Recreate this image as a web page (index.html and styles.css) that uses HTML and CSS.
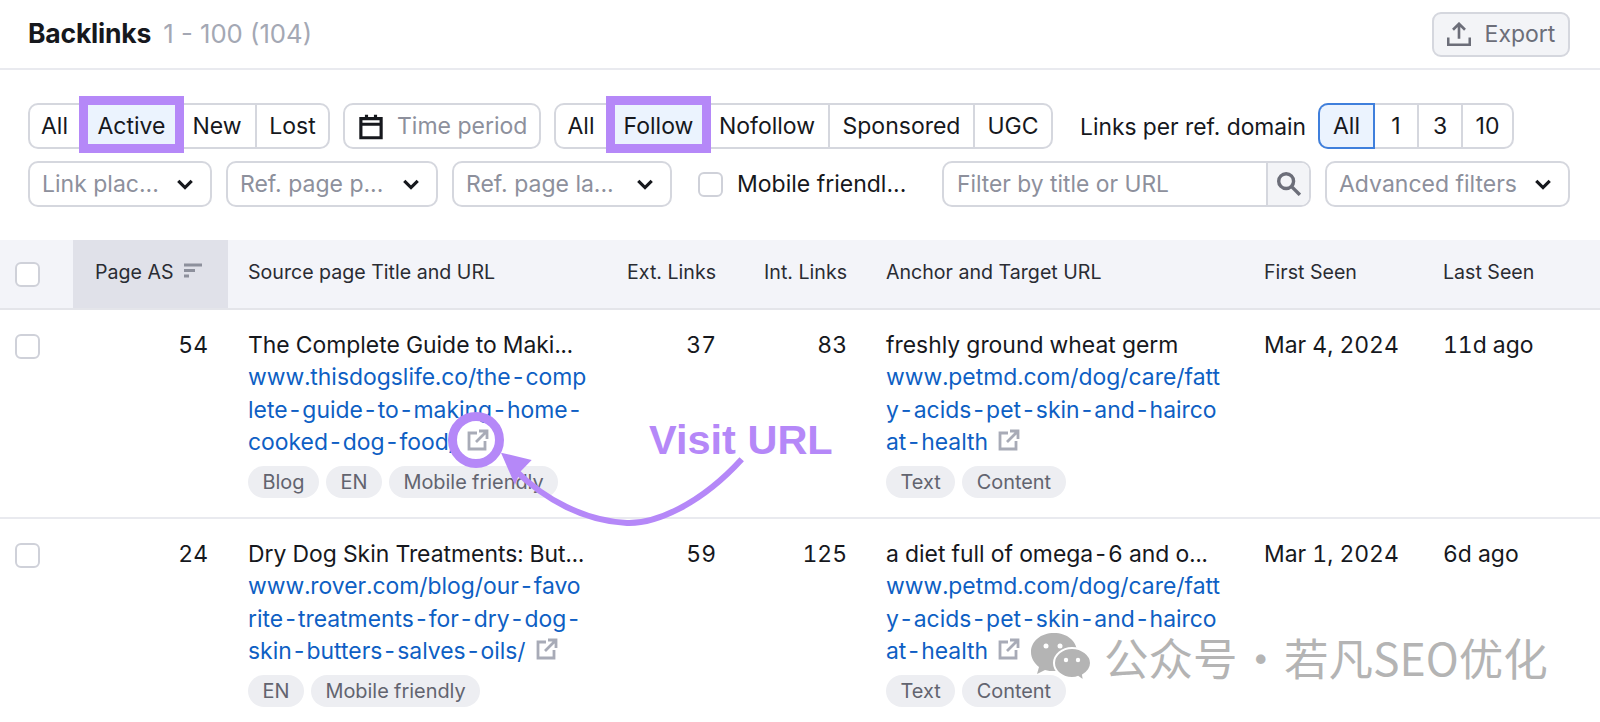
FILE: index.html
```html
<!DOCTYPE html>
<html lang="en">
<head>
<meta charset="utf-8">
<title>Backlinks</title>
<link rel="stylesheet" href="styles.css">
</head>
<body>
<main class="page">
  <header class="topbar">
    <h1 class="title">Backlinks <span class="count">1 - 100 (104)</span></h1>
    <button class="export"><svg class="export-icon" viewBox="2 2 20 20"><path d="M12 16V4M7 8.500 12 3.500l5 5M3 15v6h18v-6"/></svg>Export</button>
  </header>

  <section class="filters">
    <div class="row">
      <div class="seg seg-status">
        <span class="seg-item s-all">All</span><span class="seg-item s-active on marked">Active</span><span class="seg-item s-new">New</span><span class="seg-item s-lost">Lost</span>
      </div>
      <button class="time"><svg class="cal" viewBox="1.500 0 21 24"><path d="M3 5h18v17H3zM3 10h18M8 1.500V6M16 1.500V6"/></svg>Time period</button>
      <div class="seg seg-type">
        <span class="seg-item t-all">All</span><span class="seg-item t-follow on marked">Follow</span><span class="seg-item t-no">Nofollow</span><span class="seg-item t-sp">Sponsored</span><span class="seg-item t-ugc">UGC</span>
      </div>
      <span class="links-label">Links per ref. domain</span>
      <div class="seg seg-links">
        <span class="seg-item l-all selected">All</span><span class="seg-item l-1">1</span><span class="seg-item l-3">3</span><span class="seg-item l-10">10</span>
      </div>
    </div>
    <div class="row">
      <button class="select w-place"><span>Link plac...</span><svg class="chev" viewBox="0 0 14 9"><path d="M1.500 1.500 7 7l5.500-5.500"/></svg></button>
      <button class="select w-power"><span>Ref. page p...</span><svg class="chev" viewBox="0 0 14 9"><path d="M1.500 1.500 7 7l5.500-5.500"/></svg></button>
      <button class="select w-lang"><span>Ref. page la...</span><svg class="chev" viewBox="0 0 14 9"><path d="M1.500 1.500 7 7l5.500-5.500"/></svg></button>
      <label class="mobile"><span class="check"></span>Mobile friendl...</label>
      <div class="search">
        <span class="search-text">Filter by title or URL</span>
        <span class="search-btn"><svg class="mag" viewBox="2 2 21 21"><circle cx="10" cy="10" r="6.500"/><path d="m15 15 7 7"/></svg></span>
      </div>
      <button class="select w-adv"><span>Advanced filters</span><svg class="chev" viewBox="0 0 14 9"><path d="M1.500 1.500 7 7l5.500-5.500"/></svg></button>
    </div>
  </section>

  <section class="table">
    <div class="tr thead">
      <div class="td c-check"><span class="check"></span></div>
      <div class="td c-as sorted">Page AS<svg class="sort" viewBox="0 0 20 15"><path d="M1 2h18M1 7.500h11M1 13h5"/></svg></div>
      <div class="td c-src">Source page Title and URL</div>
      <div class="td c-ext">Ext. Links</div>
      <div class="td c-int">Int. Links</div>
      <div class="td c-anchor">Anchor and Target URL</div>
      <div class="td c-first">First Seen</div>
      <div class="td c-last">Last Seen</div>
    </div>

    <div class="tr tbody">
      <div class="td c-check"><span class="check"></span></div>
      <div class="td c-as num">54</div>
      <div class="td c-src">
        <div class="ttl">The Complete Guide to Maki...</div>
        <div class="url">www.thisdogslife.co/the-comp<br>lete-guide-to-making-home-<br>cooked-dog-food/ <svg class="ext" viewBox="0 0 24 24"><path d="M11 5H3v16h16v-8M10 14 21 3M13 3h8v8"/></svg></div>
        <div class="chips"><span class="chip">Blog</span><span class="chip">EN</span><span class="chip">Mobile friendly</span></div>
      </div>
      <div class="td c-ext num">37</div>
      <div class="td c-int num">83</div>
      <div class="td c-anchor">
        <div class="ttl">freshly ground wheat germ</div>
        <div class="url">www.petmd.com/dog/care/fatt<br>y-acids-pet-skin-and-hairco<br>at-health <svg class="ext" viewBox="0 0 24 24"><path d="M11 5H3v16h16v-8M10 14 21 3M13 3h8v8"/></svg></div>
        <div class="chips"><span class="chip">Text</span><span class="chip">Content</span></div>
      </div>
      <div class="td c-first">Mar 4, 2024</div>
      <div class="td c-last">11d ago</div>
    </div>

    <div class="tr tbody">
      <div class="td c-check"><span class="check"></span></div>
      <div class="td c-as num">24</div>
      <div class="td c-src">
        <div class="ttl">Dry Dog Skin Treatments: But...</div>
        <div class="url">www.rover.com/blog/our-favo<br>rite-treatments-for-dry-dog-<br>skin-butters-salves-oils/ <svg class="ext" viewBox="0 0 24 24"><path d="M11 5H3v16h16v-8M10 14 21 3M13 3h8v8"/></svg></div>
        <div class="chips"><span class="chip">EN</span><span class="chip">Mobile friendly</span></div>
      </div>
      <div class="td c-ext num">59</div>
      <div class="td c-int num">125</div>
      <div class="td c-anchor">
        <div class="ttl">a diet full of omega-6 and o...</div>
        <div class="url">www.petmd.com/dog/care/fatt<br>y-acids-pet-skin-and-hairco<br>at-health <svg class="ext" viewBox="0 0 24 24"><path d="M11 5H3v16h16v-8M10 14 21 3M13 3h8v8"/></svg></div>
        <div class="chips"><span class="chip">Text</span><span class="chip">Content</span></div>
      </div>
      <div class="td c-first">Mar 1, 2024</div>
      <div class="td c-last">6d ago</div>
    </div>
  </section>

  <svg class="annotation" viewBox="0 0 1600 722">
    <circle cx="476" cy="440" r="23.500" class="ring"/>
    <path class="arrow-line" d="M741.700 459.300C700 505 655 524 627 523C585 521 545 500 515 470"/>
    <path class="arrow-head" d="M501 452.700 531.700 460 520 472 515 485Z"/>
  </svg>
  <div class="visit">Visit URL</div>

  <div class="watermark">
    <svg class="wechat" viewBox="0 0 62 50">
      <path class="wc-back" d="M24 1C11 1 1 9 1 20c0 6 3 11 8 15l-2 7 8-4c3 1 6 1 9 1 13 0 23-8 23-19S37 1 24 1Z"/>
      <path class="wc-front" d="M42 16c-10 0-18 7-18 15s8 15 18 15c2 0 4 0 6-1l6 4-1-6c5-3 8-7 8-12 0-8-9-15-19-15Z"/>
      <circle class="wc-eye" cx="16" cy="14" r="2.500"/><circle class="wc-eye" cx="30" cy="14" r="2.500"/>
      <circle class="wc-eye" cx="36" cy="28" r="2.200"/><circle class="wc-eye" cx="48" cy="28" r="2.200"/>
    </svg>
    <span>公众号 · 若凡SEO优化</span>
  </div>
</main>
</body>
</html>
```

FILE: styles.css
```css
* { box-sizing: border-box; }
html, body { margin: 0; padding: 0; background: #fff; }
body { font-family: Inter, "Liberation Sans", "Noto Sans CJK SC", sans-serif; color: #16181d; overflow: hidden; }
button { font: inherit; margin: 0; }

.page { position: relative; width: 1600px; height: 722px; overflow: hidden; }

.topbar { height: 70px; border-bottom: 2px solid #e9eaef; display: flex; align-items: flex-start; justify-content: space-between; padding: 12px 30px 0 28px; }
.title { margin: 5px 0 0; font-size: 26.500px; line-height: 32px; font-weight: 700; letter-spacing: -0.2px; }
.count { font-weight: 400; font-size: 25.700px; letter-spacing: 0; color: #a4a8b4; margin-left: 6px; }
.export { width: 138px; height: 45px; border: 2px solid #d5d7de; border-radius: 9px; background: #f3f4f7; color: #6c6e79; font-size: 23px; display: flex; align-items: center; justify-content: center; gap: 14px; padding: 0 0 2px; }
.export-icon { width: 24px; height: 24px; fill: none; stroke: #6c6e79; stroke-width: 2.200; }

.filters { padding: 33px 30px 0 28px; display: flex; flex-direction: column; gap: 12px; }
.row { display: flex; align-items: center; height: 46px; }

.seg { display: flex; height: 46px; border: 2px solid #d5d7de; border-radius: 10px; font-size: 23px; }
.seg-item { display: flex; align-items: center; justify-content: center; border-left: 2px solid #d5d7de; position: relative; }
.seg-item:first-child { border-left: 0; border-radius: 8px 0 0 8px; }
.on { background: #ebf3fe; }
.marked { border-left: 0; }
.marked::after { content: ""; position: absolute; inset: -9px 0 -6px; border: 9px solid #b588f8; }
.marked + .seg-item { border-left: 0; padding-right: 5px; }
.selected { background: #ebf3fe; box-shadow: 0 0 0 2px #3f7fdc; border-radius: 8px 0 0 8px; z-index: 1; }

.seg-status { width: 302px; }
.s-all { width: 49px; } .s-active { width: 105px; } .s-new { width: 71px; } .s-lost { flex: 1; }
.time { width: 198px; height: 46px; margin-left: 13px; border: 2px solid #d5d7de; border-radius: 10px; background: #fff; color: #8d909c; font-size: 23px; display: flex; align-items: center; gap: 14px; padding: 0 0 0 14px; }
.cal { width: 24px; height: 27px; fill: none; stroke: #16181d; stroke-width: 2.800; }
.seg-type { width: 499px; margin-left: 13px; }
.t-all { width: 50px; } .t-follow { width: 105px; } .t-no { width: 117px; } .t-sp { width: 145px; } .t-ugc { flex: 1; }
.links-label { margin-left: 27px; width: 238px; font-size: 22.800px; }
.seg-links { width: 196px; }
.l-all { width: 53px; } .l-1 { width: 44px; } .l-3 { width: 44px; } .l-10 { flex: 1; }

.select { height: 46px; border: 2px solid #d5d7de; border-radius: 10px; background: #fff; color: #8d909c; font-size: 23px; display: flex; align-items: center; justify-content: space-between; padding: 0 16px 0 12px; }
.chev { width: 18px; height: 11px; fill: none; stroke: #16181d; stroke-width: 2.600; }
.w-place { width: 184px; } .w-power { width: 212px; margin-left: 14px; } .w-lang { width: 220px; margin-left: 14px; }
.w-adv { width: 245px; margin-left: 14px; }
.mobile { display: flex; align-items: center; gap: 14px; margin-left: 26px; width: 244px; font-size: 23px; }
.check { display: block; width: 25px; height: 25px; border: 2px solid #cfd1d9; border-radius: 6px; background: #fff; flex: none; }
.search { width: 369px; height: 46px; border: 2px solid #d5d7de; border-radius: 10px; display: flex; overflow: hidden; }
.search-text { flex: 1; color: #8d909c; font-size: 22.800px; padding-left: 13px; line-height: 42px; }
.search-btn { width: 43px; border-left: 2px solid #d5d7de; background: #f3f4f7; display: flex; align-items: center; justify-content: center; }
.mag { width: 24px; height: 24px; fill: none; stroke: #6c6e79; stroke-width: 3; }

.table { margin-top: 33px; }
.tr { display: grid; grid-template-columns: 73px 155px 382px 126px 131px 377px 180px 1fr; }
.thead { height: 70px; background: #f3f4f9; border-bottom: 2px solid #e4e5ea; font-size: 19.600px; color: #2a2c33; }
.thead .td { display: flex; align-items: center; padding-bottom: 4px; }
.thead .sorted { background: #e0e1e9; padding-left: 22px; gap: 9px; }
.thead .c-check { padding-left: 15px; padding-bottom: 0; }
.thead .c-src, .thead .c-first { padding-left: 20px; }
.thead .c-anchor, .thead .c-last { padding-left: 19px; }
.thead .c-ext, .thead .c-int { justify-content: flex-end; padding-right: 20px; }
.sort { width: 20px; height: 15px; margin-bottom: 4px; fill: none; stroke: #8d909c; stroke-width: 2.800; }

.tbody { height: 209px; border-bottom: 2px solid #e9eaef; font-size: 22.900px; line-height: 32px; padding-top: 19px; font-variant-numeric: tabular-nums; }
.tbody .c-check { padding: 5px 0 0 15px; }
.num { text-align: right; padding-right: 20px; }
.tbody .c-src, .tbody .c-first { padding-left: 20px; }
.tbody .c-anchor, .tbody .c-last { padding-left: 19px; }
.url { color: #0e5fc4; white-space: nowrap; line-height: 32.500px; }
.ext { width: 24px; height: 24px; fill: none; stroke: #a8abb7; stroke-width: 2.800; vertical-align: -2px; margin-left: 3px; }
.chips { display: flex; gap: 7px; margin-top: 7px; }
.chip { height: 32px; line-height: 32px; padding: 0 14.500px; border-radius: 16px; background: #edeef2; color: #62646f; font-size: 19.900px; }

.annotation { position: absolute; inset: 0; width: 1600px; height: 722px; pointer-events: none; }
.ring { fill: none; stroke: #b588f8; stroke-width: 9; }
.arrow-line { fill: none; stroke: #b588f8; stroke-width: 6; }
.arrow-head { fill: #b588f8; }
.visit { position: absolute; left: 649px; top: 415px; font-family: "Liberation Sans", Arial, sans-serif; font-size: 41.500px; line-height: 50px; font-weight: 700; color: #b588f8; }

.watermark { position: absolute; left: 1030px; top: 632px; display: flex; align-items: center; gap: 12px; font-family: "Noto Sans CJK SC", sans-serif; font-size: 44.500px; line-height: 40px; word-spacing: -9px; color: #b4b4b4; white-space: nowrap; }
.wechat { width: 62px; height: 50px; }
.wc-back { fill: #b4b4b4; }
.wc-front { fill: #b4b4b4; stroke: #fff; stroke-width: 2; }
.wc-eye { fill: #fff; }
```
